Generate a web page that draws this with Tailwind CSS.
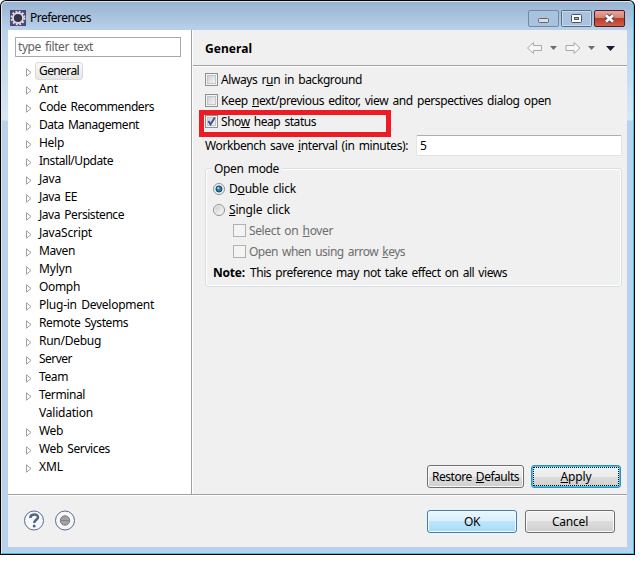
<!DOCTYPE html>
<html lang="en">
<head>
<meta charset="utf-8">
<title>Preferences</title>
<script src="https://cdn.jsdelivr.net/npm/@tailwindcss/browser@4"></script>
</head>
<body class="bg-white w-[643px] h-[564px] overflow-hidden font-['Noto_Sans',sans-serif] text-[12px] leading-[18px] text-black">
<svg class="hidden">
  <symbol id="tri" viewBox="0 0 6 9"><path d="M.5 .8V8.2L5 4.5Z" fill="#fff" stroke="#a0a0a0"/></symbol>
</svg>
<main class="w-[635px] h-[555px] bg-black pt-px pl-px pr-px pb-px rounded-t-[6px]">
 <div class="w-full h-full rounded-t-[5px] bg-[linear-gradient(#b9d1ea_28px,#d9e7f5_118px,#b9d1ea_119px)] border-r border-b border-r-[#3cc4e8] border-b-[#3cc4e8] border-l border-l-[#dce9f5] border-t border-t-[#dde7f1] flex flex-col pl-[6px] pr-[6px] pb-[6px]">
  <header class="h-[28px] shrink-0 -mx-[6px] px-[8px] flex items-start bg-linear-to-b from-[#98b3d1] to-[#b9d1ea] rounded-t-[5px]">
   <svg class="mt-[8px] w-4 h-4 shrink-0" viewBox="0 0 16 16"><rect width="16" height="16" fill="#51437c"/><circle cx="8" cy="8" r="5" fill="#37304f" stroke="#ddd" stroke-width="1.8"/><circle cx="8" cy="8" r="6.500" fill="none" stroke="#e2e2e2" stroke-width="1.8" stroke-dasharray="1.9 1.5"/></svg>
   <h1 class="ml-[4px] mt-[7px]"><span data-w="61">Preferences</span></h1>
   <div class="ml-auto mt-[8px] flex gap-[2px]">
    <svg width="31" height="17" viewBox="0 0 31 17"><rect x=".5" y=".5" width="30" height="16" rx="1.5" fill="#a9c2de" stroke="#7289a6"/><rect x="10.5" y="8.5" width="10" height="4" rx="1" fill="#ddd" stroke="#62656b"/></svg>
    <svg width="31" height="17" viewBox="0 0 31 17"><rect x=".5" y=".5" width="30" height="16" rx="1.5" fill="#a9c2de" stroke="#586c88"/><rect x="1.5" y="1.5" width="28" height="14" fill="none" stroke="#c9daec"/><rect x="10.5" y="4.5" width="10" height="8" rx="1" fill="#fff" stroke="#4b506b"/><rect x="13.5" y="7.5" width="4" height="2" fill="#9ab5d3" stroke="#4b506b"/></svg>
    <svg width="31" height="17" viewBox="0 0 31 17"><defs><linearGradient id="cl" x2="0" y2="1"><stop stop-color="#e8a99f"/><stop offset=".47" stop-color="#d48172"/><stop offset=".5" stop-color="#b93c25"/><stop offset="1" stop-color="#d1624e"/></linearGradient></defs><rect x=".5" y=".5" width="30" height="16" rx="1.5" fill="url(#cl)" stroke="#521d26"/><path d="M12 5.2L19 11.8M19 5.2L12 11.8" stroke="#4b465d" stroke-width="4.5"/><path d="M12 5.2L19 11.8M19 5.2L12 11.8" stroke="#fff" stroke-width="2.6"/></svg>
   </div>
  </header>
  <div class="flex flex-col grow bg-[#f0f0f0] w-[619px]">
   <div class="flex h-[464px] shrink-0">
    <aside class="w-[184px] bg-white border-r border-[#a0a0a0] shrink-0 pt-[7px] pl-[7px]">
     <div class="w-[166px] h-[20px] border border-[#a9a9b1] pl-[2px] leading-[17px] text-[#626262]"><span data-w="75">type filter text</span></div>
     <ul id="tree" class="mt-[5px]"></ul>
    </aside>
    <section class="grow flex flex-col border-l border-white">
     <div class="h-[36px] shrink-0 border-b border-[#a0a0a0] flex items-center pl-[12px]">
      <h2 class="font-bold mt-[2px]"><span data-w="47">General</span></h2>
      <svg class="ml-auto mr-[10px] mt-[1px]" width="90" height="14" viewBox="0 0 90 14"><path d="M.5 7L6.500 1.500V4.500H14.500V9.500H6.500V12.500ZM53 7L47 1.500V4.500H39V9.500H47V12.500Z" fill="#f7f7f7" stroke="#a8a8a8"/><path d="M23 5H30L26.500 9ZM61 5H68L64.500 9Z" fill="#6d6d6d"/><path d="M79 5H88L83.500 10Z" fill="#211633"/></svg>
     </div>
     <div class="border-t border-white pl-[12px] pt-[2px] grow flex flex-col">
      <label class="flex items-center h-[21px]"><i class="box"></i><span data-w="141">Always r<u>u</u>n in background</span></label>
      <label class="flex items-center h-[21px]"><i class="box"></i><span data-w="330">Keep <u>n</u>ext/previous editor, view and perspectives dialog open</span></label>
      <label class="relative flex items-center h-[21px]"><i class="box" data-on></i><span data-w="95">Sho<u>w</u> heap status</span><b class="absolute -left-[6px] -top-[1px] w-[192px] h-[27px] border-[5px] border-[#ed1c24]"></b></label>
      <div class="flex items-center mt-[3px] h-[21px]"><span data-w="203">Workbench save <u>i</u>nterval (in minutes):</span><div class="ml-[8px] w-[206px] h-[21px] bg-white border border-[#dfe3ea] border-t-[#abadb3] rounded-[2px] pl-[3px] leading-[19px]">5</div></div>
      <fieldset class="relative mt-[12px] w-[417px] h-[119px] border border-[#d5dfe5] rounded-[3px] shadow-[inset_1px_1px_0_#fff,inset_-1px_-1px_0_#fff] pl-[7px] pt-[9px]">
       <span class="absolute left-[5px] -top-[9px] bg-[#f0f0f0] px-[3px]"><span data-w="65">Open mode</span></span>
       <label class="flex items-center h-[21px]"><i class="radio" data-on></i><span data-w="67">D<u>o</u>uble click</span></label>
       <label class="flex items-center h-[21px]"><i class="radio"></i><span data-w="61"><u>S</u>ingle click</span></label>
       <label class="flex items-center h-[21px] ml-[20px] text-[#6d6d6d]"><i class="box" data-off></i><span data-w="84">Select on <u>h</u>over</span></label>
       <label class="flex items-center h-[21px] ml-[20px] text-[#6d6d6d]"><i class="box" data-off></i><span data-w="156">Open when using arrow <u>k</u>eys</span></label>
       <p class="flex items-center h-[21px]"><b class="w-[37px]"><span data-w="32" data-bold>Note:</span></b><span data-w="257">This preference may not take effect on all views</span></p>
      </fieldset>
      <div class="mt-auto mb-[6px] mr-[6px] flex justify-end gap-[7px]">
       <button class="w-[97px] h-[23px] rounded-[3px] border border-[#707070] shadow-[inset_0_0_0_1px_#fafafa] bg-[linear-gradient(#f2f2f2,#ebebeb_50%,#dddddd_50%,#cfcfcf)] leading-[21px]"><span data-w="87">Restore <u>D</u>efaults</span></button>
       <button class="w-[90px] h-[23px] rounded-[3px] border border-[#2c8fc0] shadow-[inset_0_0_0_1px_#45c5ee] bg-[linear-gradient(#f2f2f2,#ebebeb_50%,#dddddd_50%,#cfcfcf)] p-px"><span class="block h-[19px] border border-dotted border-black leading-[17px]"><span data-w="31"><u>A</u>pply</span></span></button>
      </div>
     </div>
    </section>
   </div>
   <footer class="grow border-t border-[#a0a0a0] shadow-[inset_0_1px_0_#fff] flex items-start pl-[16px] pr-[12px]">
    <svg class="mt-[15px]" width="54" height="22" viewBox="0 0 54 22"><g fill="#f7f8fa" stroke="#566b90"><circle cx="10" cy="10.500" r="9.500"/><circle cx="41" cy="10.500" r="9.500"/></g><path d="M6.300 8C6.300 3.300 14 3.300 14 7.300C14 10 10.200 9.800 10.200 13" fill="none" stroke="#50658b" stroke-width="2.500"/><circle cx="10.200" cy="16" r="1.500" fill="#50658b"/><circle cx="41" cy="10.500" r="4.700" fill="#a2a2a2" stroke="#777"/><path d="M37 10.500H45" stroke="#848484"/></svg>
    <div class="ml-auto mt-[15px] flex gap-[8px]">
     <button class="w-[90px] h-[23px] rounded-[3px] border border-[#3c7fb1] shadow-[inset_0_0_0_1px_#f3fbff] bg-[linear-gradient(#eaf6fd,#d9f0fc_50%,#bee6fd_50%,#a7d9f5)] leading-[21px]"><span data-w="16">OK</span></button>
     <button class="w-[90px] h-[23px] rounded-[3px] border border-[#707070] shadow-[inset_0_0_0_1px_#fafafa] bg-[linear-gradient(#f2f2f2,#ebebeb_50%,#dddddd_50%,#cfcfcf)] leading-[21px]"><span data-w="36">Cancel</span></button>
    </div>
   </footer>
  </div>
 </div>
</main>
<script>
const items = [['General',40],['Ant',19],['Code Recommenders',115],['Data Management',100],['Help',25],['Install/Update',74],['Java',22],['Java EE',38],['Java Persistence',85],['JavaScript',53],['Maven',36],['Mylyn',33],['Oomph',41],['Plug-in Development',115],['Remote Systems',89],['Run/Debug',62],['Server',33],['Team',29],['Terminal',46],['Validation',54],['Web',24],['Web Services',71],['XML',24]];
document.getElementById('tree').innerHTML = items.map(([name, w], i) =>
  `<li class="flex items-center h-[18px] pl-[11px]">${name === 'Validation' ? '<i class="w-[6px]"></i>' : '<svg class="w-[6px] h-[9px] mt-[3px]"><use href="#tri"/></svg>'}<span class="ml-[3px] px-[3px] border rounded-[3px] leading-[16px] ${i ? 'border-transparent' : 'border-[#d9d9d9] bg-linear-to-b from-[#fafafa] to-[#e6e6e6]'}"><span data-w="${w}">${name}</span></span></li>`).join('');
const gradient = '<defs><linearGradient id="bg" x2="1" y2="1"><stop stop-color="#cbcfd5"/><stop offset="1" stop-color="#f7f7f7"/></linearGradient></defs>';
document.querySelectorAll('.box').forEach(el => {
  const off = 'off' in el.dataset, on = 'on' in el.dataset;
  el.outerHTML = `<svg class="w-[13px] h-[13px] mr-[3px] shrink-0" viewBox="0 0 13 13">${gradient}<rect x=".5" y=".5" width="12" height="12" fill="#f4f4f4" stroke="${off ? '#b1b1b1' : '#8e8f8f'}"/>${off ? '' : '<rect x="2.5" y="2.5" width="8" height="8" fill="url(#bg)" stroke="#c3c7cc"/>'}${on ? '<path d="M3.500 6L5.500 9.500L9.800 2.500" fill="none" stroke="#414f93" stroke-width="1.900"/>' : ''}</svg>`;
});
document.querySelectorAll('.radio').forEach(el => {
  const on = 'on' in el.dataset;
  el.outerHTML = `<svg class="w-[12px] h-[12px] mr-[4px] shrink-0" viewBox="0 0 12 12">${gradient}<circle cx="6" cy="6" r="5.500" fill="#f4f4f4" stroke="#8e8f8f"/><circle cx="6" cy="6" r="4" fill="url(#bg)"/>${on ? '<circle cx="6" cy="6" r="3" fill="#2583b4" stroke="#173e5c"/><circle cx="5.300" cy="5" r="1.100" fill="#a7e5f7"/>' : ''}</svg>`;
});
/* Give each label its designed width by adjusting the tracking. */
const ctx = document.createElement('canvas').getContext('2d');
const wordGap = 1.5;
document.querySelectorAll('[data-w]').forEach(el => {
  const text = el.textContent, spaces = text.split(' ').length - 1;
  const bold = 'bold' in el.dataset || el.parentElement.tagName === 'H2';
  ctx.font = `${bold ? 'bold ' : ''}12px "Noto Sans"`;
  const natural = ctx.measureText(text).width + spaces * wordGap;
  el.style.whiteSpace = 'nowrap';
  el.style.wordSpacing = wordGap + 'px';
  el.style.letterSpacing = (el.dataset.w - natural) / text.length + 'px';
});
</script>
</body>
</html>
